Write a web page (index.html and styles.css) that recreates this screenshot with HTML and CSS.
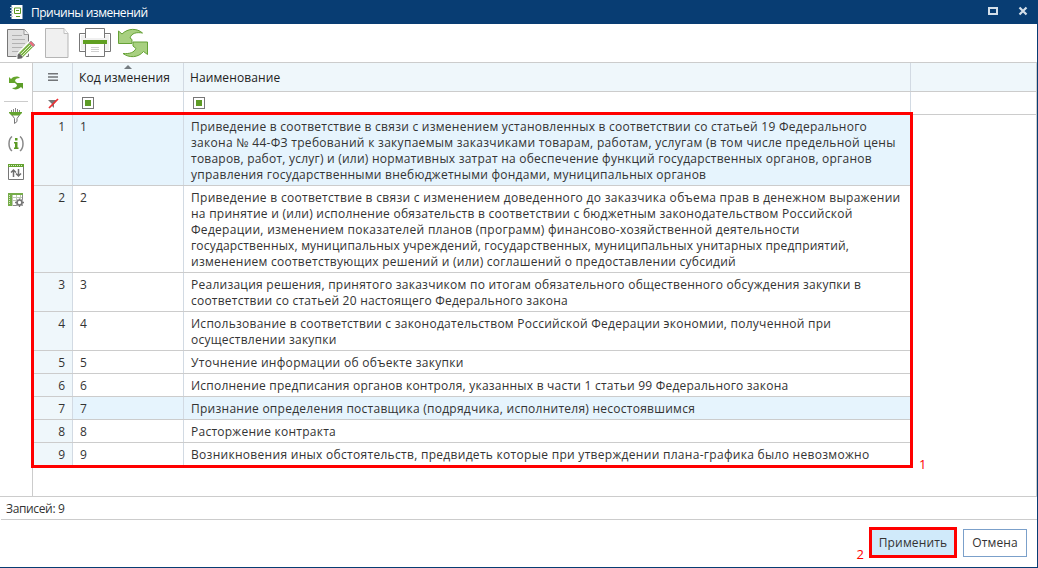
FILE: index.html
```html
<!DOCTYPE html>
<html lang="ru">
<head>
<meta charset="utf-8">
<title>Причины изменений</title>
<link rel="stylesheet" href="styles.css">
</head>
<body>
<div class="window">
  <header class="titlebar">
    <svg class="app-icon" width="16" height="16" viewBox="0 0 16 16"><rect x="2.500" y="1" width="11" height="14" fill="#fff"/><path d="M1 3.500h3M1 6.500h3M1 9.500h3M1 12.500h3" stroke="#b8c9d8"/><path d="M5.500 4h6v5.500h-6z" fill="none" stroke="#5c9a25"/><path d="M7 6.500h3M7 12.500h4" stroke="#5c9a25"/></svg>
    <h1 class="title">Причины изменений</h1>
    <svg class="win-icon" width="12" height="12" viewBox="0 0 12 12"><path d="M2 3h8v6H2z" fill="none" stroke="#d4dfe9" stroke-width="2"/></svg>
    <svg class="win-icon close" width="12" height="12" viewBox="0 0 12 12"><path d="M2.500 2.500l7 7M9.500 2.500l-7 7" stroke="#d4dfe9" stroke-width="2.200"/></svg>
  </header>
  <div class="toolbar">
    <svg width="32" height="34" viewBox="0 0 32 34"><path d="M1.500 2.500h17l4 5v22h-21z" fill="#e0e0e0" stroke="#777"/><path d="M18 2.500v5h5" fill="#f2f2f2" stroke="#999"/><path d="M6 8.500h10M6 12.500h13M6 16.500h13M6 20.500h11M6 24.500h8" stroke="#b2b2b2"/><path d="M10 31l2-6L25 12l6 5-13 15z" fill="#fff"/><path d="M13 26l10-10 4 4-10 10z" fill="#78b144"/><path d="M14.500 27.500l10-10M16 29l10-10" stroke="#e0f0ca"/><path d="M23 16l2-2 4 4-2 2z" fill="#e96f7d" stroke="#999" stroke-width=".8"/><path d="M11.500 32v-4l1.500-2 4 4-1.500 1.500z" fill="#666"/></svg>
    <svg width="28" height="34" viewBox="0 0 28 34"><path d="M1.500 1.500h18.500l4 5v24H1.500z" fill="#f0f0f0" stroke="#b5b5b5"/><path d="M20 1.500v5h4" fill="#fafafa" stroke="#c0c0c0"/></svg>
    <svg width="34" height="34" viewBox="0 0 34 34"><path d="M.5 7.500h31v18H.5z" fill="#fff" stroke="#777"/><path d="M2 9h28v15H2z" fill="#f0f0f0"/><path d="M6.500 12V2.500h19V12" fill="#fff" stroke="#777"/><path d="M4 14h24v4H4z" fill="#5f9f21"/><path d="M6.500 18v12.500h19V18" fill="#fff" stroke="#777"/><path d="M12 21.500h8M12 23.500h8M12 25.500h8" stroke="#cfcfcf"/></svg>
    <svg width="34" height="34" viewBox="0 0 34 34"><path d="M1.500 16.500V4l3.500 3C11 1 20 1 25.500 6c-6-1-11 0-12.500 5l2 1.500v4z" fill="#a8d080" stroke="#65a136"/><path d="M30.500 15v12.500l-4-3C21 31 12 31 6 26.500c7 .5 11-1 13-5L16 19v-4z" fill="#a8d080" stroke="#65a136"/></svg>
  </div>
  <main class="content">
    <aside class="side">
      <svg width="16" height="16" viewBox="0 0 16 16"><path d="M1 8V2l2 2c3-3 7-3 9-1-3 0-5 1-5 3l2 2z" fill="#65a52c"/><path d="M15 8v6l-2-2c-3 3-7 3-9 1 3 0 5-1 5-3L7 8z" fill="#5c9d28"/></svg>
      <hr class="side-line">
      <svg width="16" height="16" viewBox="0 0 16 16"><path d="M3.500 2v3M5.500 1v4M7.500 0v5M9.500 1v4M11.500 2v3" stroke="#888"/><path d="M1 4h13v1l-2.500 2.500h-8L1 5z" fill="#64a330"/><path d="M4 7l2.500 3.500v5l2.500-2v-3L11.500 7" fill="none" stroke="#777"/></svg>
      <svg width="16" height="16" viewBox="0 0 16 16"><path d="M4 .5C0 3.500 0 12 4 15M12 .5c4 3 4 11.500 0 14.500" fill="none" stroke="#888" stroke-width="1.500"/><path d="M7 2h2.500v2.500H7zM6 6h3.500v5.500h1V13H6v-1.500h1v-4H6z" fill="#5c9b25"/></svg>
      <svg width="16" height="16" viewBox="0 0 16 16"><path d="M.5.500h15v15H.5z" fill="#fff" stroke="#777"/><path d="M0 0h16v3H0z" fill="#64a330"/><path d="M1 1.500h14" stroke="#d6ebc5" stroke-dasharray="1"/><path d="M5.500 13V6M3 8.500L5.500 6 8 8.500M10.500 5v7M8 9.500l2.500 2.500L13 9.500" fill="none" stroke="#707070" stroke-width="1.500"/></svg>
      <svg width="16" height="16" viewBox="0 0 16 16"><path d="M.5 1.500h14v12H.5z" fill="#fff" stroke="#888"/><path d="M0 1h15v2H0zM0 3h4v11H0z" fill="#75ac49"/><path d="M4.500 3v11M8.500 3v4M12.500 3v4M4 5.500h10M4 8.500h4" stroke="#bbc9b1"/><path d="M1.500 3v10" stroke="#d9ebc9" stroke-dasharray="1"/><circle cx="11.500" cy="10.500" r="4" fill="#fff"/><circle cx="11.500" cy="10.500" r="2.500" fill="none" stroke="#777" stroke-width="1.700"/><path d="M11.500 6.500V8M11.500 13v2M7 10.500h2M14 10.500h2M8.500 7.500l1 1M13.500 12.500l1 1M14.500 7.500l-1 1M9.500 12.500l-1 1" stroke="#777" stroke-width="1.300"/></svg>
    </aside>
    <section class="grid">
      <div class="line head">
        <div class="num"><svg width="10" height="8" viewBox="0 0 10 8"><path d="M0 0h10v1.500H0zM0 3.200h10v1.500H0zM0 6.500h10V8H0z" fill="#727578"/></svg></div>
        <div class="code"><span class="label">Код изменения</span><i class="sort"></i></div>
        <div class="name"><span class="label">Наименование</span></div>
        <div class="rest"></div>
      </div>
      <div class="line filter">
        <div class="num"><svg width="11" height="11" viewBox="0 0 11 11"><path d="M0 2h9L6 6v4L4 8V6z" fill="#777"/><path d="M1 10L10 1" stroke="#ed3034" stroke-width="1.700"/></svg></div>
        <div class="code"><i class="check"></i></div>
        <div class="name"><i class="check"></i></div>
        <div class="rest"></div>
      </div>
      <div class="rows">
        <div class="line row active"><div class="num">1</div><div class="code">1</div><div class="name"><p>Приведение в соответствие в связи с изменением установленных в соответствии со статьей 19 Федерального</p><p class="wide">закона № 44-ФЗ требований к закупаемым заказчиками товарам, работам, услугам (в том числе предельной цены</p><p class="snug">товаров, работ, услуг) и (или) нормативных затрат на обеспечение функций государственных органов, органов</p><p>управления государственными внебюджетными фондами, муниципальных органов</p></div></div>
        <div class="line row"><div class="num">2</div><div class="code">2</div><div class="name"><p class="wide">Приведение в соответствие в связи с изменением доведенного до заказчика объема прав в денежном выражении</p><p>на принятие и (или) исполнение обязательств в соответствии с бюджетным законодательством Российской</p><p class="wide">Федерации, изменением показателей планов (программ) финансово-хозяйственной деятельности</p><p class="tight">государственных, муниципальных учреждений, государственных, муниципальных унитарных предприятий,</p><p>изменением соответствующих решений и (или) соглашений о предоставлении субсидий</p></div></div>
        <div class="line row"><div class="num">3</div><div class="code">3</div><div class="name"><p>Реализация решения, принятого заказчиком по итогам обязательного общественного обсуждения закупки в</p><p class="snug">соответствии со статьей 20 настоящего Федерального закона</p></div></div>
        <div class="line row"><div class="num">4</div><div class="code">4</div><div class="name"><p>Использование в соответствии с законодательством Российской Федерации экономии, полученной при</p><p>осуществлении закупки</p></div></div>
        <div class="line row"><div class="num">5</div><div class="code">5</div><div class="name"><p class="wide">Уточнение информации об объекте закупки</p></div></div>
        <div class="line row"><div class="num">6</div><div class="code">6</div><div class="name"><p class="snug">Исполнение предписания органов контроля, указанных в части 1 статьи 99 Федерального закона</p></div></div>
        <div class="line row active"><div class="num">7</div><div class="code">7</div><div class="name"><p>Признание определения поставщика (подрядчика, исполнителя) несостоявшимся</p></div></div>
        <div class="line row"><div class="num">8</div><div class="code">8</div><div class="name"><p>Расторжение контракта</p></div></div>
        <div class="line row"><div class="num">9</div><div class="code">9</div><div class="name"><p class="wide">Возникновения иных обстоятельств, предвидеть которые при утверждении плана-графика было невозможно</p></div></div>
        <div class="outline"></div>
        <span class="mark mark-rows">1</span>
      </div>
    </section>
  </main>
  <div class="status">Записей: 9</div>
  <footer class="actions">
    <span class="mark mark-apply">2</span>
    <button class="button apply">Применить</button>
    <button class="button cancel">Отмена</button>
  </footer>
</div>
</body>
</html>
```

FILE: styles.css
```css
* { box-sizing: border-box; }
body { margin: 0; font: 12px/16px "Open Sans", "Noto Sans", sans-serif; color: #333; }
p { margin: 0; }
svg { display: block; flex: none; }
.window { width: 1038px; height: 568px; display: flex; flex-direction: column; background: #fff; border-right: 1px solid #083d73; border-bottom: 1px solid #083d73; overflow: hidden; }
.titlebar { height: 24px; flex: none; margin-right: -1px; display: flex; align-items: center; padding: 0 9px; background: #083d73; color: #fff; }
.title { margin: 2px auto 0 6px; font-size: 12px; font-weight: 400; line-height: 16px; letter-spacing: -0.5px; letter-spacing: -0.48px; }
.win-icon { margin-top: -2px; }
.close { margin-left: 18px; }
.toolbar { height: 38px; flex: none; display: flex; padding: 3px 6px; }
.toolbar svg:nth-child(1) { margin-right: 6px; }
.toolbar svg:nth-child(2) { margin: 0 7px 0 0; }
.toolbar svg:nth-child(3) { margin: -1px 4px 0 0; }
.content { height: 435px; flex: none; display: flex; border: 1px solid #ccc; border-left: 0; }
.side { width: 33px; flex: none; border-right: 1px solid #ccc; display: flex; flex-direction: column; align-items: center; gap: 12px; padding: 12px 0 0; }
.side-line { width: 24px; height: 1px; border: 0; margin: -2px 0 -6px; background: #ccc; }
.grid { flex: 1; min-width: 0; }
.line { display: flex; border-bottom: 1px solid #ccc; }
.num { width: 40px; flex: none; border-right: 1px solid #d2dae3; background: #eff7fb; }
.code { width: 111px; flex: none; border-right: 1px solid #d2dae3; }
.name { width: 727px; flex: none; letter-spacing: 0.255px; }
.wide { letter-spacing: 0.295px; }
.snug { letter-spacing: 0.228px; }
.tight { letter-spacing: 0.185px; }
.head { height: 29px; background: #eff7fb; color: #222; }
.head .num, .head .code, .head .name, .filter .num, .filter .code, .filter .name { display: flex; align-items: center; }
.head .num, .filter .num { justify-content: center; }
.head .code, .head .name { padding: 2px 0 0 6px; letter-spacing: 0.1px; }
.head .code { position: relative; }
.head .name, .filter .name { border-right: 1px solid #d2dae3; }
.sort { position: absolute; left: 51px; top: 2px; border: 4px solid transparent; border-top: 0; border-bottom-color: #747b80; }
.filter { height: 23px; }
.filter .num { background: #fff; padding-left: 2px; }
.filter .code, .filter .name { padding-left: 9px; }
.check { width: 12px; height: 12px; border: 1px solid #777; background: #5d9b25 content-box; padding: 2px; }
.rows { position: relative; }
.row { width: 878px; }
.row .num { padding: 4px 7px 2px; text-align: right; }
.row .code { padding: 4px 7px 2px; }
.row .name { padding: 4px 0 2px 7px; white-space: nowrap; }
.active { background: #e6f4fd; }
.outline { position: absolute; left: -2px; top: -3px; width: 882px; height: 356px; border: 3px solid #f00; }
.mark { color: #f00; font-size: 13px; }
.mark-rows { position: absolute; left: 886px; top: 341px; }
.status { height: 23px; flex: none; margin-left: 1px; padding: 4px 5px; border-bottom: 1px solid #ccc; font-size: 12px; letter-spacing: -0.35px; }
.actions { display: flex; justify-content: flex-end; align-items: flex-start; padding: 7px 10px; }
.button { margin: 0; padding: 0; font: inherit; color: #333; letter-spacing: 0.15px; }
.apply { width: 88px; height: 31px; border: 3px solid #f00; background: #d0eafa; }
.cancel { width: 64px; height: 28px; margin: 2px 0 0 6px; border: 1px solid #7ba0ca; background: #fff; }
.mark-apply { margin: 19px 5px 0 0; }
```
